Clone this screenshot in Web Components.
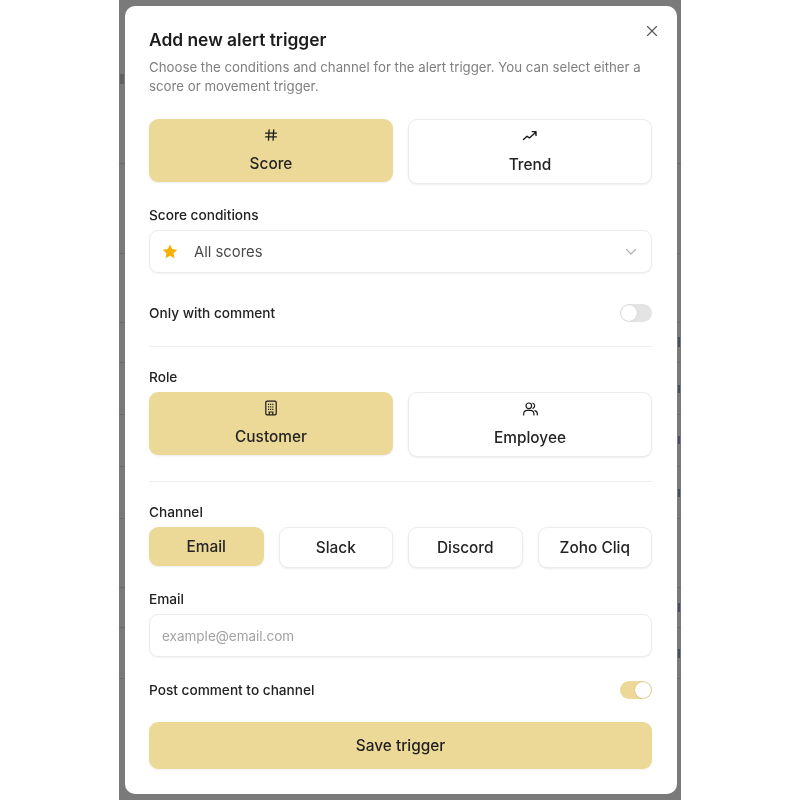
<!DOCTYPE html>
<html lang="en">
<head>
<meta charset="utf-8">
<title>Add new alert trigger</title>
<style>
  html, body { margin: 0; background: #fff; }
  body { font-family: Inter, "Liberation Sans", sans-serif; color: #1f1f1f; }
</style>
</head>
<body>
<modal-backdrop>
  <alert-dialog heading="Add new alert trigger">
    <span slot="intro">Choose the conditions and channel for the alert trigger. You can select either a score or movement trigger.</span>

    <option-row style="margin-top:23px">
      <option-card selected>
        <svg slot="icon" width="16" height="16" viewBox="0 0 16 16" fill="none" stroke="#1a1a1a" stroke-width="1.3" stroke-linecap="round"><path d="M6.1 2.8 5.5 13.2M10.7 2.8l-.6 10.4M2.6 6.2h10.8M2.6 9.8h10.8"/></svg>
        Score
      </option-card>
      <option-card>
        <svg slot="icon" width="16" height="16" viewBox="0 0 16 16" fill="none" stroke="#1a1a1a" stroke-width="1.4" stroke-linecap="round" stroke-linejoin="round"><path d="M1.5 11.5 5 8.2l2.4 1.7 6.6-6M10.2 3.6H14v3.8"/></svg>
        Trend
      </option-card>
    </option-row>

    <field-label style="margin-top:22px">Score conditions</field-label>
    <select-box>
      <svg slot="icon" width="16" height="16" viewBox="0 0 16 16"><path fill="#f5b000" d="M8 .4l2.2 4.7 5 .6-3.7 3.5 1 5.1L8 11.8l-4.5 2.5 1-5.1L.8 5.7l5-.6z"/></svg>
      All scores
    </select-box>

    <switch-row style="margin-top:31px">Only with comment</switch-row>
    <divider-line style="margin-top:24px"></divider-line>

    <field-label style="margin-top:21px">Role</field-label>
    <option-row>
      <option-card selected>
        <svg slot="icon" width="16" height="16" viewBox="0 0 16 16" fill="none" stroke="#1a1a1a" stroke-width="1.2"><rect x="2.8" y="1.2" width="10.4" height="13.6" rx="1.3"/><path stroke-dasharray="1.2 .9" d="M5 4.3h6M5 6.8h6M5 9.3h6"/><path d="M6.2 14.8v-2.8h3.6v2.8"/></svg>
        Customer
      </option-card>
      <option-card>
        <svg slot="icon" width="16" height="16" viewBox="0 0 16 16" fill="none" stroke="#1a1a1a" stroke-width="1.2" stroke-linecap="round"><circle cx="6.8" cy="4.8" r="2.8"/><path d="M1.7 14v-1.2a3.6 3.6 0 0 1 3.6-3.4h3a3.6 3.6 0 0 1 3.6 3.4V14M10.9 2.2a2.8 2.8 0 0 1 0 5.2M12.9 9.6a3.4 3.4 0 0 1 2.4 3.2V14"/></svg>
        Employee
      </option-card>
    </option-row>

    <divider-line style="margin-top:24px"></divider-line>

    <field-label style="margin-top:21px">Channel</field-label>
    <option-row columns="4">
      <channel-chip selected>Email</channel-chip>
      <channel-chip>Slack</channel-chip>
      <channel-chip>Discord</channel-chip>
      <channel-chip>Zoho Cliq</channel-chip>
    </option-row>

    <field-label style="margin-top:22px">Email</field-label>
    <text-field>example@email.com</text-field>

    <switch-row on style="margin-top:24px">Post comment to channel</switch-row>

    <save-button>Save trigger</save-button>
  </alert-dialog>
</modal-backdrop>

<script>
class ModalBackdrop extends HTMLElement {
  constructor() {
    super();
    // the dimmed table behind the dialog only shows in the side slivers:
    // row lines, and the cut-off edge of some cell text
    const rows = [163, 253, 322, 362, 414, 466, 518, 587, 627, 678];
    const lines = rows.map(y => `linear-gradient(#6c6c6c,#6c6c6c) 0 ${y}px / 100% 1px no-repeat`);
    const cut = [[559, 337, 2, 10], [559, 385, 2, 8], [559, 436, 2, 8], [559, 489, 2, 8], [559, 603, 2, 9], [559, 649, 2, 9]];
    const bits = cut.map(([x, y, w, h]) => `linear-gradient(#47505e,#47505e) ${x}px ${y}px / ${w}px ${h}px no-repeat`);
    bits.push('linear-gradient(#626262,#626262) 1px 74px / 4px 10px no-repeat');
    const layers = bits.concat(lines).join(',');
    this.attachShadow({ mode: 'open' }).innerHTML = `
    <style>
      :host {
        display: block;
        box-sizing: border-box;
        width: 562px;
        height: 800px;
        margin: 0 auto;
        padding: 6px 4px 6px 6px;
        background: ${layers}, #7a7a7a;
        overflow: hidden;
        filter: blur(.35px);
      }
    </style>
    <slot></slot>`;
  }
}
customElements.define('modal-backdrop', ModalBackdrop);

class AlertDialog extends HTMLElement {
  constructor() {
    super();
    this.attachShadow({ mode: 'open' }).innerHTML = `
    <style>
      :host {
        display: flex;
        flex-direction: column;
        box-sizing: border-box;
        position: relative;
        height: 788px;
        padding: 23px 25px 0 24px;
        background: #fff;
        border-radius: 10px;
      }
      h2 {
        margin: 0;
        font-size: 17.4px;
        line-height: 21px;
        font-weight: 600;
        color: #1c1c1c;
      }
      p {
        margin: 8px 0 0;
        font-size: 13.25px;
        line-height: 19px;
        color: #7f7f7f;
      }
      button {
        position: absolute;
        top: 18px;
        right: 18px;
        width: 14px;
        height: 14px;
        padding: 0;
        border: 0;
        background: none;
        display: flex;
      }
    </style>
    <h2>${this.getAttribute('heading')}</h2>
    <p><slot name="intro"></slot></p>
    <button aria-label="Close">
      <svg width="14" height="14" viewBox="0 0 14 14" fill="none" stroke="#555" stroke-width="1.1" stroke-linecap="round"><path d="M2.5 2.5l9 9M11.5 2.5l-9 9"/></svg>
    </button>
    <slot></slot>`;
  }
}
customElements.define('alert-dialog', AlertDialog);

class OptionRow extends HTMLElement {
  constructor() {
    super();
    const n = this.getAttribute('columns') || 2;
    this.attachShadow({ mode: 'open' }).innerHTML = `
    <style>
      :host {
        display: grid;
        grid-template-columns: repeat(${n}, 1fr);
        column-gap: 15px;
        align-items: start;
      }
    </style>
    <slot></slot>`;
  }
}
customElements.define('option-row', OptionRow);

class OptionCard extends HTMLElement {
  constructor() {
    super();
    this.attachShadow({ mode: 'open' }).innerHTML = `
    <style>
      :host {
        display: flex;
        flex-direction: column;
        align-items: center;
        box-sizing: border-box;
        height: 65px;
        padding-top: 8px;
        border: 1px solid #ececec;
        border-radius: 9px;
        background: #fff;
        box-shadow: 0 1px 2px rgba(0,0,0,.08);
        font-size: 15.4px;
        line-height: 20px;
        font-weight: 500;
        color: #242424;
      }
      :host([selected]) {
        height: 63px;
        padding-top: 8px;
        border: 0;
        background: #ecd998;
      }
      .icon { display: flex; height: 16px; margin-bottom: 11px; }
    </style>
    <span class="icon"><slot name="icon"></slot></span>
    <slot></slot>`;
  }
}
customElements.define('option-card', OptionCard);

class ChannelChip extends HTMLElement {
  constructor() {
    super();
    this.attachShadow({ mode: 'open' }).innerHTML = `
    <style>
      :host {
        display: flex;
        align-items: center;
        justify-content: center;
        box-sizing: border-box;
        height: 41px;
        border: 1px solid #ececec;
        border-radius: 9px;
        background: #fff;
        box-shadow: 0 1px 2px rgba(0,0,0,.08);
        font-size: 15.4px;
        font-weight: 500;
        color: #242424;
      }
      :host([selected]) {
        height: 39px;
        border: 0;
        background: #ecd998;
      }
    </style>
    <slot></slot>`;
  }
}
customElements.define('channel-chip', ChannelChip);

class FieldLabel extends HTMLElement {
  constructor() {
    super();
    this.attachShadow({ mode: 'open' }).innerHTML = `
    <style>
      :host {
        display: block;
        font-size: 13.65px;
        line-height: 18px;
        font-weight: 450;
        color: #222;
        margin-bottom: 6px;
      }
    </style>
    <slot></slot>`;
  }
}
customElements.define('field-label', FieldLabel);

class SelectBox extends HTMLElement {
  constructor() {
    super();
    this.attachShadow({ mode: 'open' }).innerHTML = `
    <style>
      :host {
        display: flex;
        align-items: center;
        box-sizing: border-box;
        height: 43px;
        padding: 0 14px 0 12px;
        border: 1px solid #ececec;
        border-radius: 9px;
        box-shadow: 0 1px 2px rgba(0,0,0,.06);
        font-size: 14.8px;
        color: #4a4a4a;
      }
      .icon { display: flex; margin-right: 16px; }
      .text { flex: 1; }
      svg.chev { display: block; }
    </style>
    <span class="icon"><slot name="icon"></slot></span>
    <span class="text"><slot></slot></span>
    <svg class="chev" width="12" height="12" viewBox="0 0 12 12" fill="none" stroke="#b0b0b0" stroke-width="1.1" stroke-linecap="round" stroke-linejoin="round"><path d="M1.5 3.5l4.5 4.5 4.5-4.5"/></svg>`;
  }
}
customElements.define('select-box', SelectBox);

class TextField extends HTMLElement {
  constructor() {
    super();
    this.attachShadow({ mode: 'open' }).innerHTML = `
    <style>
      :host {
        display: flex;
        align-items: center;
        box-sizing: border-box;
        height: 43px;
        padding: 0 12px;
        border: 1px solid #ececec;
        border-radius: 9px;
        box-shadow: 0 1px 2px rgba(0,0,0,.06);
        font-size: 13.5px;
        color: #a3a3a3;
      }
    </style>
    <slot></slot>`;
  }
}
customElements.define('text-field', TextField);

class SwitchRow extends HTMLElement {
  constructor() {
    super();
    this.attachShadow({ mode: 'open' }).innerHTML = `
    <style>
      :host {
        display: flex;
        align-items: center;
        justify-content: space-between;
        height: 18px;
        font-size: 13.65px;
        font-weight: 450;
        color: #222;
      }
      .track {
        display: flex;
        box-sizing: border-box;
        width: 32px;
        height: 18px;
        padding: 1px;
        border-radius: 9px;
        background: #e4e4e4;
      }
      .knob {
        width: 16px;
        height: 16px;
        border-radius: 50%;
        background: #fff;
        box-shadow: 0 0 1px rgba(0,0,0,.25);
      }
      :host([on]) .track { background: #ecd998; justify-content: flex-end; }
    </style>
    <span><slot></slot></span>
    <span class="track"><span class="knob"></span></span>`;
  }
}
customElements.define('switch-row', SwitchRow);

class DividerLine extends HTMLElement {
  constructor() {
    super();
    this.attachShadow({ mode: 'open' }).innerHTML = `
    <style>
      :host { display: block; height: 1px; background: #efefef; }
    </style>`;
  }
}
customElements.define('divider-line', DividerLine);

class SaveButton extends HTMLElement {
  constructor() {
    super();
    this.attachShadow({ mode: 'open' }).innerHTML = `
    <style>
      :host {
        display: flex;
        align-items: center;
        justify-content: center;
        height: 47px;
        margin-top: 23px;
        border-radius: 9px;
        background: #ecd998;
        box-shadow: 0 1px 2px rgba(0,0,0,.06);
        font-size: 15.4px;
        font-weight: 500;
        color: #1f1f1f;
      }
    </style>
    <slot></slot>`;
  }
}
customElements.define('save-button', SaveButton);
</script>
</body>
</html>
